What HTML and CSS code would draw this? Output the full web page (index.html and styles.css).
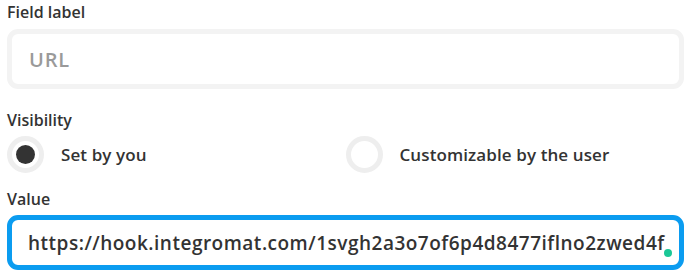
FILE: index.html
```html
<!DOCTYPE html>
<html>
<head>
<meta charset="utf-8">
<link rel="stylesheet" href="styles.css">
</head>
<body>
<div class="form">
  <div class="label">Field label</div>
  <div class="input placeholder">URL</div>
  <div class="label vis">Visibility</div>
  <div class="radios">
    <div class="radio"><span class="ring checked"></span><span class="rtext">Set by you</span></div>
    <div class="radio"><span class="ring"></span><span class="rtext">Customizable by the user</span></div>
  </div>
  <div class="label val">Value</div>
  <div class="input focus"><span class="valtext">https://hook.integromat.com/1svgh2a3o7of6p4d8477iflno2zwed4f</span><span class="dot"></span></div>
</div>
</body>
</html>
```
FILE: styles.css
```css
body { margin: 0; background: #fff; font-family: "Open Sans", "Noto Sans", sans-serif; color: #333; }
.form { padding: 2px 3px 0 7px; display: flex; flex-direction: column; }
.label { font-size: 16px; font-weight: 600; line-height: 20px; color: #333; }
.input { box-sizing: border-box; height: 60px; margin-top: 7px; border: 5px solid #f3f3f3; border-radius: 11px; display: flex; align-items: center; padding-left: 17px; font-size: 20px; font-weight: 600; position: relative; }
.placeholder { color: #9a9a9a; letter-spacing: 0.8px; }
.vis { margin-top: 21px; }
.radios { display: flex; margin-top: 6px; }
.radio { display: flex; align-items: center; width: 339px; }
.ring { box-sizing: border-box; width: 37px; height: 37px; border-radius: 50%; border: 5px solid #eeeeee; display: flex; align-items: center; justify-content: center; }
.ring.checked::after { content: ""; width: 19px; height: 19px; border-radius: 50%; background: #333; }
.rtext { margin-left: 17px; font-size: 17px; font-weight: 600; letter-spacing: 0.1px; }
.val { margin-top: 16px; }
.focus { height: 55px; margin-top: 6px; border: 5px solid #0b9cf0; padding-left: 16px; color: #333; font-size: 19px; font-weight: 600; letter-spacing: 0.5px; }
.dot { position: absolute; right: 7px; bottom: 8px; width: 8px; height: 8px; border-radius: 50%; background: #1bc796; }
```
